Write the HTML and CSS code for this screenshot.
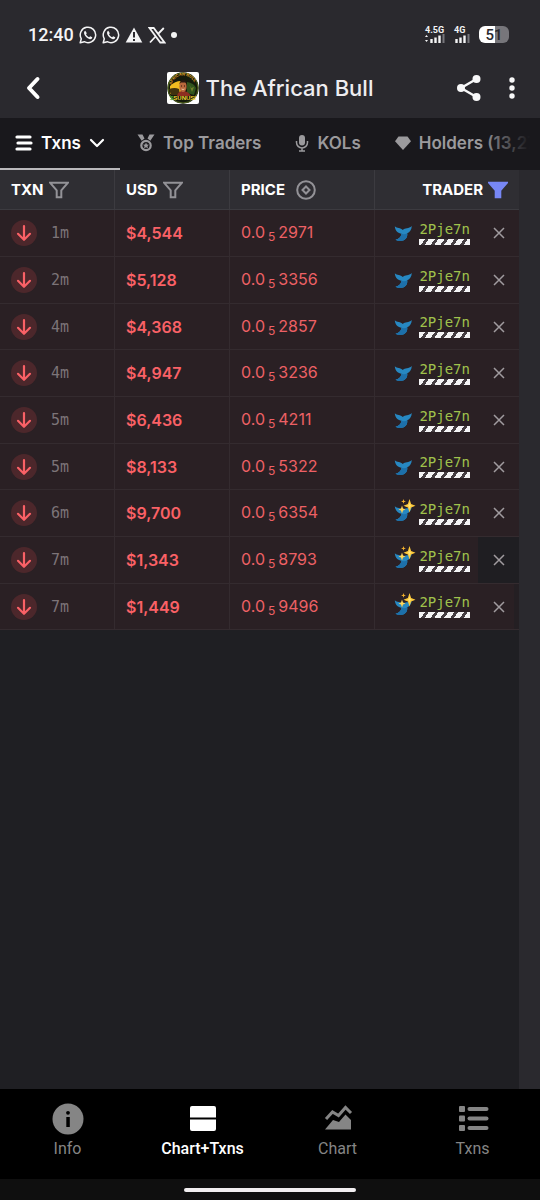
FILE: index.html
```html
<!DOCTYPE html>
<html lang="en">
<head>
  <meta charset="UTF-8">
  <meta name="viewport" content="width=device-width, initial-scale=1.0">
  <title>The African Bull</title>
  <link rel="stylesheet" href="styles.css">
</head>
<body>
  <!-- Shared icons -->
  <svg class="sprite" width="0" height="0" aria-hidden="true">
    <symbol id="whatsapp" viewBox="0 0 18 18">
      <path d="M1.2 16.8l1.1-4A7.7 7.7 0 1 1 5.3 15.7z" fill="none" stroke="#f4f4f5" stroke-width="1.5" stroke-linejoin="round"/>
      <path d="M6.3 4.8c-1.3.6-1.6 2.1-.9 3.6 1 2.2 2.7 3.8 4.9 4.6 1.6.5 2.8-.1 3-1.7l-2.1-1.1-1.1 1.1C8.7 10.7 7.7 9.7 7 8.3l.8-1z" fill="#f4f4f5"/>
    </symbol>
    <symbol id="funnel" viewBox="0 0 20 18">
      <path d="M1.2 1.800h17.600L12.300 9.300v7H7.700v-7z"/>
    </symbol>
    <symbol id="arrow-down" viewBox="0 0 26 26">
      <circle cx="13" cy="13" r="13" fill="#4c272b"/>
      <path d="M13 6v13.500M7 13.800l6 6 6-6" fill="none" stroke="#fa6166" stroke-width="2.200" stroke-linecap="round" stroke-linejoin="round"/>
    </symbol>
    <symbol id="whale" viewBox="0 0 18 18">
      <path d="M.8 2.200C3 4.500 6.500 3.500 8.800 6 11 3.800 14.800 4.800 17.800 2c-.2 3.800-1.800 6-4.600 7.300.5 3.200-1 6.200-4 7.200-2.500.6-5.500.5-7.700-.8 3-.7 5.600-2.700 6-5.900C4.200 9.300 1.200 7 .8 2.200z" fill="#2788c2"/>
      <path d="M7.500 9.800c2 .7 3.900.4 5.700-.5.5 3.200-1 6.200-4 7.200-2.500.6-5.500.5-7.700-.8 3-.7 5.600-2.700 6-5.900z" fill="#1d70aa"/>
    </symbol>
    <symbol id="sparkles" viewBox="0 0 20 20">
      <path d="M13.500 1l1.600 5 4.400 1.700-4.400 1.700-1.600 5-1.600-5-4.400-1.700L11.900 6z" fill="#fdc93a"/>
      <path d="M13.500 4.500l.8 2.600 1.600.6-1.600.6-.8 2.600-.8-2.600-1.600-.6 1.600-.6z" fill="#ffe278"/>
      <path d="M6 7.500l1 3 2.500 1-2.500 1-1 3-1-3-2.500-1 2.500-1z" fill="#ffd659"/>
      <path d="M7.500 1l.6 1.800 1.800.6-1.800.6-.6 1.800-.6-1.800-1.800-.6 1.800-.6z" fill="#f6b22c"/>
    </symbol>
    <symbol id="close" viewBox="0 0 12 12">
      <path d="M1 1l10 10M11 1L1 11" fill="none" stroke="#a09b9f" stroke-width="1.500"/>
    </symbol>
  </svg>

  <div class="status-bar">
    <span class="clock">12:40</span>
    <svg width="18" height="18"><use href="#whatsapp"/></svg>
    <svg width="18" height="18"><use href="#whatsapp"/></svg>
    <svg width="18" height="18" viewBox="0 0 18 18">
      <path d="M9 1.500L17.300 16.500H.7z" fill="#f4f4f5"/>
      <path d="M9 6v5.500M9 13v2" stroke="#2a292e" stroke-width="2"/>
    </svg>
    <svg width="18" height="18" viewBox="0 0 18 18">
      <path d="M1.500 2h4.200l10.800 14.500h-4.200zM2 16.500l6-6.500M10 8l5.800-6" fill="none" stroke="#f4f4f5" stroke-width="1.800"/>
    </svg>
    <span class="more-dot"></span>
    <div class="status-right">
      <div class="signal">
        <span>4.5G</span>
        <svg width="20" height="9" viewBox="0 0 20 9">
          <path d="M0 3l1.500-2L3 3zM0 6l1.500 2L3 6z" fill="#f4f4f5"/>
          <path d="M6.500 5v4M10.500 3.500V9M14.500 1.500V9" stroke="#f4f4f5" stroke-width="2.400"/>
          <path d="M18.500 0v9" stroke="#77767b" stroke-width="2"/>
        </svg>
      </div>
      <div class="signal">
        <span>4G</span>
        <svg width="16" height="9" viewBox="0 0 16 9">
          <path d="M2.500 5v4M6.500 3.500V9M10.500 1.500V9" stroke="#f4f4f5" stroke-width="2.400"/>
          <path d="M14.500 0v9" stroke="#77767b" stroke-width="2"/>
        </svg>
      </div>
      <div class="battery">51</div>
    </div>
  </div>

  <header class="header">
    <button class="icon-btn" aria-label="Back">
      <svg width="16" height="24" viewBox="0 0 16 24"><path d="M12.500 3L4 12l8.500 9" fill="none" stroke="#fff" stroke-width="4" stroke-linecap="round" stroke-linejoin="round"/></svg>
    </button>
    <div class="title">
      <svg width="32" height="32" viewBox="0 0 32 32">
        <defs>
          <path id="badge-top" d="M4.500 13A12 12 0 0 1 28 13"/>
        </defs>
        <rect width="32" height="32" rx="2" fill="#fff"/>
        <circle cx="16" cy="16" r="15.700" fill="#151b0c"/>
        <circle cx="16" cy="16" r="15" fill="none" stroke="#52651c" stroke-width="1"/>
        <path d="M3 14q5-5 11-5v11l-11 2z" fill="#f1bc20"/>
        <path d="M2 17q6-2 10 0l1 6H4z" fill="#40320e"/>
        <path d="M20 10q7 1 9 6l-2 7-7-2z" fill="#31551d"/>
        <path d="M22 12l2 4 3-1-2 5z" fill="#72802b"/>
        <path d="M10 24q1-5 6-5t8 5z" fill="#8e2d20"/>
        <ellipse cx="16" cy="14.500" rx="3.600" ry="5.500" fill="#b9683c"/>
        <path d="M12.500 12.500q0-4.500 3.700-4.500t3.500 4.500l-1-2h-5z" fill="#291710"/>
        <path d="M14 14h1M17 14h1" stroke="#28130c"/>
        <path d="M14.500 17q1.700 1 3 0" stroke="#f2c9a0" fill="none"/>
        <text class="badge-name"><textPath href="#badge-top">AFRICAN BULL</textPath></text>
        <text class="badge-tag" x="16" y="28" text-anchor="middle"><tspan fill="#48a333">$</tspan>SUNUSI</text>
      </svg>
      <h1>The African Bull</h1>
    </div>
    <div class="header-actions">
      <button class="icon-btn" aria-label="Share">
        <svg width="26" height="28" viewBox="0 0 26 28">
          <path d="M20.500 5L5 14l15.500 9" fill="none" stroke="#f8f8f9" stroke-width="2.400"/>
          <circle cx="20.500" cy="5" r="4" fill="#f8f8f9"/><circle cx="5" cy="14" r="4" fill="#f8f8f9"/><circle cx="20.500" cy="23" r="4" fill="#f8f8f9"/>
        </svg>
      </button>
      <button class="icon-btn" aria-label="More">
        <svg width="6" height="22" viewBox="0 0 6 22" fill="#f8f8f9"><circle cx="3" cy="3" r="2.700"/><circle cx="3" cy="11" r="2.700"/><circle cx="3" cy="19" r="2.700"/></svg>
      </button>
    </div>
  </header>

  <nav class="tabs">
    <button class="tab active">
      <svg width="18" height="16" viewBox="0 0 18 16"><path d="M2 2h13M3 8h13M2 14h13" stroke="#fff" stroke-width="3.200" stroke-linecap="round"/></svg>
      Txns
      <svg width="16" height="16" viewBox="0 0 16 16"><path d="M2 5l6 6 6-6" fill="none" stroke="#fff" stroke-width="2.200" stroke-linecap="round" stroke-linejoin="round"/></svg>
    </button>
    <button class="tab">
      <svg width="18" height="18" viewBox="0 0 18 18">
        <path d="M.5.500h5l2 4-2.800 2.300zM17.500.500h-5l-2 4 2.800 2.300z" fill="#9b9a9d"/>
        <circle cx="9" cy="11.500" r="4.700" fill="none" stroke="#9b9a9d" stroke-width="2.200"/>
        <path d="M9 8.500l.9 1.900 2.100.3-1.500 1.400.4 2.100L9 13.200l-1.900 1 .4-2.100L6 10.700l2.100-.3z" fill="#9b9a9d"/>
      </svg>
      Top Traders
    </button>
    <button class="tab">
      <svg width="14" height="18" viewBox="0 0 14 18">
        <rect x="4" y="1" width="6" height="10.500" rx="3" fill="#9b9a9d"/>
        <path d="M1.500 7v1.500a5.500 5.500 0 0 0 11 0V7M7 14v3M4 17h6" fill="none" stroke="#9b9a9d" stroke-width="1.500"/>
      </svg>
      KOLs
    </button>
    <button class="tab">
      <svg width="16" height="16" viewBox="0 0 16 16"><path d="M3.500 1.500h9L16 6.300 8 15 0 6.300z" fill="#9b9a9d"/></svg>
      Holders (13,275)
    </button>
  </nav>

  <main class="content">
    <table class="txns">
      <colgroup>
        <col class="col-side"><col class="col-side"><col class="col-price"><col><col class="col-close">
      </colgroup>
      <thead>
        <tr>
          <th><div class="head">TXN <button aria-label="Filter type"><svg class="funnel" width="20" height="18"><use href="#funnel"/></svg></button></div></th>
          <th><div class="head">USD <button aria-label="Filter USD"><svg class="funnel" width="20" height="18"><use href="#funnel"/></svg></button></div></th>
          <th>
            <div class="head price-head">PRICE
              <button aria-label="Toggle price unit">
                <svg width="20" height="20" viewBox="0 0 20 20" fill="none" stroke="#939297" stroke-width="2"><circle cx="10" cy="10" r="8.800"/><path d="M10 6.500l3.500 3.500-3.500 3.500L6.500 10z"/></svg>
              </button>
            </div>
          </th>
          <th colspan="2"><div class="head trader-head">TRADER <button aria-label="Filter trader"><svg class="funnel on" width="20" height="18"><use href="#funnel"/></svg></button></div></th>
        </tr>
      </thead>
      <tbody>
        <tr>
          <td><div class="side"><svg width="26" height="26"><use href="#arrow-down"/></svg>1m</div></td>
          <td class="usd">$4,544</td>
          <td class="price">0.0<small>5</small>2971</td>
          <td><div class="trader"><span class="tail"><svg width="18" height="18"><use href="#whale"/></svg></span><a href="#">2Pje7n</a></div></td>
          <td class="close"><button aria-label="Clear trader"><svg width="12" height="12"><use href="#close"/></svg></button></td>
        </tr>
        <tr>
          <td><div class="side"><svg width="26" height="26"><use href="#arrow-down"/></svg>2m</div></td>
          <td class="usd">$5,128</td>
          <td class="price">0.0<small>5</small>3356</td>
          <td><div class="trader"><span class="tail"><svg width="18" height="18"><use href="#whale"/></svg></span><a href="#">2Pje7n</a></div></td>
          <td class="close"><button aria-label="Clear trader"><svg width="12" height="12"><use href="#close"/></svg></button></td>
        </tr>
        <tr>
          <td><div class="side"><svg width="26" height="26"><use href="#arrow-down"/></svg>4m</div></td>
          <td class="usd">$4,368</td>
          <td class="price">0.0<small>5</small>2857</td>
          <td><div class="trader"><span class="tail"><svg width="18" height="18"><use href="#whale"/></svg></span><a href="#">2Pje7n</a></div></td>
          <td class="close"><button aria-label="Clear trader"><svg width="12" height="12"><use href="#close"/></svg></button></td>
        </tr>
        <tr>
          <td><div class="side"><svg width="26" height="26"><use href="#arrow-down"/></svg>4m</div></td>
          <td class="usd">$4,947</td>
          <td class="price">0.0<small>5</small>3236</td>
          <td><div class="trader"><span class="tail"><svg width="18" height="18"><use href="#whale"/></svg></span><a href="#">2Pje7n</a></div></td>
          <td class="close"><button aria-label="Clear trader"><svg width="12" height="12"><use href="#close"/></svg></button></td>
        </tr>
        <tr>
          <td><div class="side"><svg width="26" height="26"><use href="#arrow-down"/></svg>5m</div></td>
          <td class="usd">$6,436</td>
          <td class="price">0.0<small>5</small>4211</td>
          <td><div class="trader"><span class="tail"><svg width="18" height="18"><use href="#whale"/></svg></span><a href="#">2Pje7n</a></div></td>
          <td class="close"><button aria-label="Clear trader"><svg width="12" height="12"><use href="#close"/></svg></button></td>
        </tr>
        <tr>
          <td><div class="side"><svg width="26" height="26"><use href="#arrow-down"/></svg>5m</div></td>
          <td class="usd">$8,133</td>
          <td class="price">0.0<small>5</small>5322</td>
          <td><div class="trader"><span class="tail"><svg width="18" height="18"><use href="#whale"/></svg></span><a href="#">2Pje7n</a></div></td>
          <td class="close"><button aria-label="Clear trader"><svg width="12" height="12"><use href="#close"/></svg></button></td>
        </tr>
        <tr>
          <td><div class="side"><svg width="26" height="26"><use href="#arrow-down"/></svg>6m</div></td>
          <td class="usd">$9,700</td>
          <td class="price">0.0<small>5</small>6354</td>
          <td><div class="trader"><span class="tail"><svg width="18" height="18"><use href="#whale"/></svg><svg class="sparkles" width="20" height="20"><use href="#sparkles"/></svg></span><a href="#">2Pje7n</a></div></td>
          <td class="close"><button aria-label="Clear trader"><svg width="12" height="12"><use href="#close"/></svg></button></td>
        </tr>
        <tr>
          <td><div class="side"><svg width="26" height="26"><use href="#arrow-down"/></svg>7m</div></td>
          <td class="usd">$1,343</td>
          <td class="price">0.0<small>5</small>8793</td>
          <td><div class="trader"><span class="tail"><svg width="18" height="18"><use href="#whale"/></svg><svg class="sparkles" width="20" height="20"><use href="#sparkles"/></svg></span><a href="#">2Pje7n</a></div></td>
          <td class="close pressed"><button aria-label="Clear trader"><svg width="12" height="12"><use href="#close"/></svg></button></td>
        </tr>
        <tr>
          <td><div class="side"><svg width="26" height="26"><use href="#arrow-down"/></svg>7m</div></td>
          <td class="usd">$1,449</td>
          <td class="price">0.0<small>5</small>9496</td>
          <td><div class="trader"><span class="tail"><svg width="18" height="18"><use href="#whale"/></svg><svg class="sparkles" width="20" height="20"><use href="#sparkles"/></svg></span><a href="#">2Pje7n</a></div></td>
          <td class="close edge"><button aria-label="Clear trader"><svg width="12" height="12"><use href="#close"/></svg></button></td>
        </tr>
      </tbody>
    </table>
  </main>

  <nav class="bottom-nav">
    <a href="#">
      <svg width="32" height="32" viewBox="0 0 32 32"><circle cx="16" cy="16" r="15.500" fill="#858585"/><circle cx="16" cy="9.800" r="1.900"/><path d="M14.300 14h3.500v10h-3.500z"/></svg>
      Info
    </a>
    <a href="#" class="active">
      <svg width="32" height="32" viewBox="0 0 32 32" fill="#fff"><path d="M5 3h22q2 0 2 2v9.500H3V5q0-2 2-2zM3 16.500h26V26q0 2-2 2H5q-2 0-2-2z"/></svg>
      Chart+Txns
    </a>
    <a href="#">
      <svg width="32" height="32" viewBox="0 0 32 32"><path d="M4 16l6.500-7 6 3.500L23.500 4.500 29 10" fill="none" stroke="#858585" stroke-width="3"/><path d="M3 26.500l8-9.500 6 2 6.500-7.500L29 17v9.500z" fill="#858585"/></svg>
      Chart
    </a>
    <a href="#">
      <svg width="32" height="32" viewBox="0 0 32 32" fill="#858585"><rect x="2" y="3" width="6" height="6" rx="1"/><rect x="2" y="12.500" width="6" height="6" rx="1"/><rect x="2" y="22" width="6" height="6" rx="1"/><rect x="10.500" y="4" width="21" height="4" rx="2"/><rect x="10.500" y="13.500" width="21" height="4" rx="2"/><rect x="10.500" y="23" width="21" height="4" rx="2"/></svg>
      Txns
    </a>
  </nav>
  <div class="gesture"><span></span></div>
</body>
</html>
```
FILE: styles.css
```css
* {
  margin: 0;
  padding: 0;
  box-sizing: border-box;
}

body {
  display: flex;
  flex-direction: column;
  min-height: 100vh;
  font-family: Inter, sans-serif;
  background-color: #2a292e;
  color: #fff;
  overflow-x: hidden;
}

svg {
  flex-shrink: 0;
  display: block;
}

.sprite {
  position: absolute;
}

button {
  background: none;
  border: none;
  color: inherit;
  font: inherit;
  cursor: pointer;
}

a {
  text-decoration: none;
}

/* Status bar */
.status-bar {
  display: flex;
  align-items: center;
  gap: 5px;
  padding: 24px 31px 13px 28px;
  height: 58px;
  font-family: Roboto, sans-serif;
  color: #f4f4f5;
}

.clock {
  font-size: 18px;
  font-weight: 500;
}

.more-dot {
  width: 6px;
  height: 6px;
  border-radius: 50%;
  background-color: #f4f4f5;
}

.status-right {
  display: flex;
  align-items: center;
  gap: 9px;
  margin-left: auto;
}

.signal {
  font-size: 9px;
  font-weight: 700;
  line-height: 8px;
}

.battery {
  width: 30px;
  height: 17px;
  border-radius: 6px;
  background: linear-gradient(90deg, #fff 16px, #77767b 16px);
  color: #2a292e;
  font-size: 15px;
  font-weight: 500;
  line-height: 18px;
  text-align: center;
}

/* Header */
.header {
  display: grid;
  grid-template-columns: 75px 1fr 75px;
  align-items: center;
  height: 60px;
  padding: 0 25px;
}

.icon-btn {
  display: flex;
  justify-content: center;
}

.header > .icon-btn {
  justify-self: start;
}

.title {
  display: flex;
  align-items: center;
  justify-content: center;
  gap: 7px;
}

h1 {
  font-size: 22px;
  font-weight: 500;
  color: #eeedf0;
  white-space: nowrap;
}

.badge-name {
  font: bold 4px "Liberation Sans", sans-serif;
  fill: #e4a52c;
}

.badge-tag {
  font: bold 6px "Liberation Sans", sans-serif;
  fill: #f4d22f;
}

.header-actions {
  display: flex;
  align-items: center;
  justify-content: flex-end;
  gap: 27px;
}

/* Tabs */
.tabs {
  position: relative;
  display: flex;
  height: 52px;
  background-color: #19181c;
  overflow: hidden;
}

/* Fade out the tabs that run off the side */
.tabs::after {
  content: "";
  position: absolute;
  top: 0;
  right: 0;
  width: 60px;
  height: 100%;
  background: linear-gradient(90deg, transparent, #19181c 50px);
}

.tab {
  display: flex;
  flex-shrink: 0;
  align-items: center;
  gap: 8px;
  padding: 0 17px;
  font-size: 17px;
  font-weight: 600;
  color: #9b9a9d;
  white-space: nowrap;
  border-bottom: 2px solid transparent;
}

.tab.active {
  padding: 0 15px;
  color: #fff;
  border-bottom-color: #b9b8bb;
}

/* Transactions table */
.content {
  flex: 1;
  padding-right: 21px;
  background: linear-gradient(#1f1f23, #1f1f23) content-box;
}

.txns {
  width: 100%;
  table-layout: fixed;
  border-collapse: separate;
  border-spacing: 0;
}

.col-side {
  width: 115px;
}

.col-price {
  width: 145px;
}

.col-close {
  width: 41px;
}

th {
  height: 40px;
  padding: 0 11px;
  background-color: #2f2e33;
  border-right: 1px solid #3c3b40;
  border-bottom: 1px solid #3c3b40;
}

th:last-child {
  border-right: none;
}

.head {
  display: flex;
  align-items: center;
  gap: 5px;
  font-size: 15px;
  font-weight: 700;
}

.price-head {
  gap: 11px;
}

.trader-head {
  justify-content: flex-end;
}

.funnel {
  fill: none;
  stroke: #939297;
  stroke-width: 2;
}

.funnel.on {
  fill: #7787f5;
  stroke: #7787f5;
}

td {
  height: 47px;
  padding: 0 11px;
  background-color: #2a2024;
  border-right: 1px solid #342b2f;
  border-bottom: 1px solid #342b2f;
}

tr:nth-child(3n) td {
  height: 46px;
}

td:nth-child(4),
td:nth-child(5) {
  padding: 0;
  border-right: none;
}

.side {
  display: flex;
  align-items: center;
  gap: 14px;
  font-family: "DejaVu Sans Mono", monospace;
  font-size: 15px;
  color: #7c7478;
}

.usd {
  font-size: 16px;
  font-weight: 600;
  color: #fa6166;
}

.price {
  font-size: 16px;
  color: #ed6065;
}

.price small {
  margin: 0 3px;
  font-size: 12px;
  vertical-align: -3px;
}

.trader {
  display: flex;
  align-items: center;
  justify-content: flex-end;
  gap: 7px;
  padding-right: 8px;
}

.trader a {
  padding-bottom: 3px;
  font-family: "DejaVu Sans Mono", monospace;
  font-size: 14px;
  line-height: 20px;
  color: #a0c24c;
}

/* Striped bar under the trader name */
.trader a::after {
  content: "";
  display: block;
  height: 6px;
  background: repeating-linear-gradient(125deg, #f4f4f5 0 5px, #453e42 5px 8px);
}

.tail {
  position: relative;
}

.sparkles {
  position: absolute;
  top: -6px;
  left: 2px;
}

.close button {
  display: flex;
  align-items: center;
  justify-content: center;
  width: 100%;
  height: 40px;
  padding-left: 2px;
}

.close.pressed {
  background-color: #1f1e22;
}

.close.edge {
  background: linear-gradient(90deg, #2a2024 36px, #241f23 36px);
}

/* Bottom navigation */
.bottom-nav {
  display: grid;
  grid-template-columns: repeat(4, 1fr);
  height: 90px;
  padding-top: 14px;
  background-color: #000;
}

.bottom-nav a {
  display: flex;
  flex-direction: column;
  align-items: center;
  gap: 4px;
  font-family: Roboto, sans-serif;
  font-size: 16px;
  line-height: 20px;
  color: #858585;
}

.bottom-nav a.active {
  font-weight: 500;
  color: #fff;
}

.gesture {
  display: flex;
  align-items: center;
  justify-content: center;
  height: 21px;
  background-color: #0f0f0f;
}

.gesture span {
  width: 32%;
  height: 4px;
  border-radius: 2px;
  background-color: #f1eef0;
}
```
